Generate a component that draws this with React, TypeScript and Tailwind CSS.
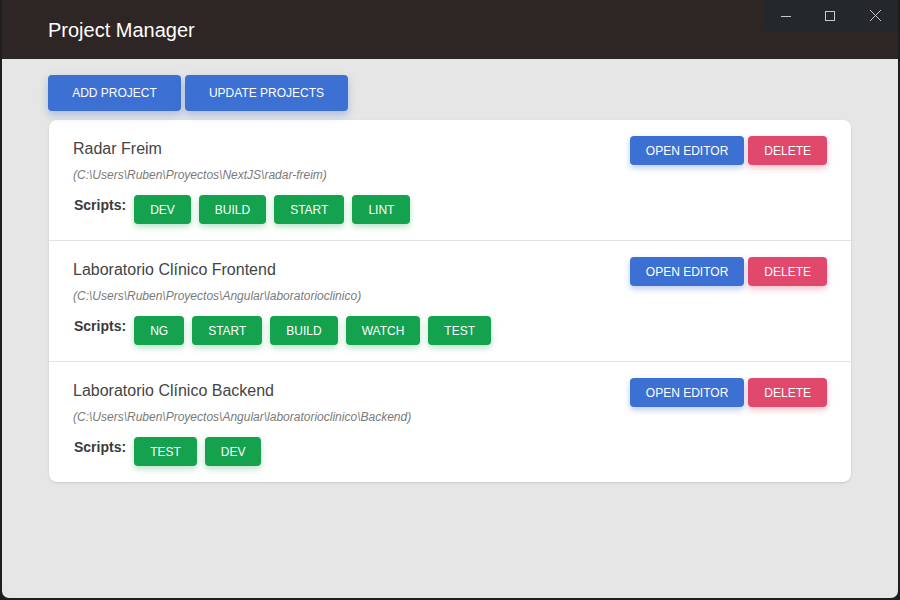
import React from 'react';

interface Project {
  name: string;
  path: string;
  scripts: string[];
}

const PROJECTS: Project[] = [
  {
    name: 'Radar Freim',
    path: '(C:\\Users\\Ruben\\Proyectos\\NextJS\\radar-freim)',
    scripts: ['dev', 'build', 'start', 'lint'],
  },
  {
    name: 'Laboratorio Clínico Frontend',
    path: '(C:\\Users\\Ruben\\Proyectos\\Angular\\laboratorioclinico)',
    scripts: ['ng', 'start', 'build', 'watch', 'test'],
  },
  {
    name: 'Laboratorio Clínico Backend',
    path: '(C:\\Users\\Ruben\\Proyectos\\Angular\\laboratorioclinico\\Backend)',
    scripts: ['test', 'dev'],
  },
];

const WindowControls: React.FC = () => (
  <div className="flex h-[31px] w-[134px] items-center justify-around self-start bg-[#24272b] text-[#c8c8c8]">
    <svg width="12" height="12" viewBox="0 0 12 12">
      <path d="M1 6.5h10" stroke="currentColor" strokeWidth="1" />
    </svg>
    <svg width="12" height="12" viewBox="0 0 12 12">
      <rect x="1.5" y="1.5" width="9" height="9" fill="none" stroke="currentColor" strokeWidth="1" />
    </svg>
    <svg width="13" height="13" viewBox="0 0 13 13">
      <path d="M1 1l11 11M12 1L1 12" stroke="currentColor" strokeWidth="1" />
    </svg>
  </div>
);

const ProjectRow: React.FC<{ project: Project; last: boolean }> = ({ project, last }) => (
  <div className={`px-6 pt-4 ${last ? 'h-[120px]' : 'h-[121px] border-b border-[#e2e2e2]'}`}>
    <div className="flex items-start justify-between">
      <div className="mt-px">
        <h2 className="text-[16px] leading-6 text-[#444]">{project.name}</h2>
        <p className="mt-[5px] text-[12px] italic leading-[18px] text-[#7a7a7a]">{project.path}</p>
      </div>
      <div className="flex gap-1">
        <button className="h-[29px] rounded-[4px] bg-[#3c70d2] px-4 text-[12px] uppercase text-white shadow-[0_3px_6px_rgba(60,112,210,0.35)]">
          Open Editor
        </button>
        <button className="h-[29px] rounded-[4px] bg-[#e0496b] px-4 text-[12px] uppercase text-white shadow-[0_3px_6px_rgba(224,73,107,0.35)]">
          Delete
        </button>
      </div>
    </div>
    <div className="mt-[11px] flex items-start gap-2">
      <span className="pl-px text-[14px] font-bold leading-[20px] text-[#3a3a3a]">Scripts:</span>
      {project.scripts.map((s) => (
        <button
          key={s}
          className="h-[29px] rounded-[4px] bg-[#14a24f] px-4 text-[12px] uppercase text-white shadow-[0_3px_6px_rgba(20,162,79,0.3)]"
        >
          {s}
        </button>
      ))}
    </div>
  </div>
);

export default function App() {
  return (
    <div className="h-[600px] w-[900px] bg-[#1e1e1e] pb-[2px] pl-[2px] pr-[2px] font-['Liberation_Sans',Arial,sans-serif]">
      <div className="flex h-full flex-col overflow-hidden rounded-b-[7px] bg-[#e6e6e6]">
        <header className="flex h-[59px] shrink-0 justify-between bg-[#2e2624]">
          <h1 className="pl-[46px] pt-[18px] text-[20px] leading-6 text-white">Project Manager</h1>
          <WindowControls />
        </header>
        <main className="pl-[46px] pt-4">
          <div className="flex gap-1">
            <button className="h-9 w-[133px] rounded-[4px] bg-[#3c70d2] text-[12px] font-medium uppercase text-white shadow-[0_4px_8px_rgba(60,112,210,0.35)]">
              Add Project
            </button>
            <button className="h-9 w-[163px] rounded-[4px] bg-[#3c70d2] text-[12px] font-medium uppercase text-white shadow-[0_4px_8px_rgba(60,112,210,0.35)]">
              Update Projects
            </button>
          </div>
          <div className="ml-px mt-[9px] w-[802px] overflow-hidden rounded-lg bg-white shadow-sm">
            {PROJECTS.map((p, i) => (
              <ProjectRow key={p.name} project={p} last={i === PROJECTS.length - 1} />
            ))}
          </div>
        </main>
      </div>
    </div>
  );
}
